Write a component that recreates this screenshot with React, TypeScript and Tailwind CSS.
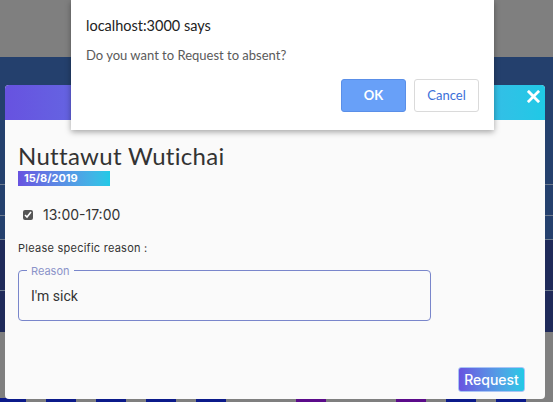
import React from 'react';

function CloseIcon() {
    return (
        <svg width="13" height="13" viewBox="0 0 14 14" fill="none">
            <path d="M2 2L12 12M12 2L2 12" stroke="white" strokeWidth="3" strokeLinecap="square" />
        </svg>
    );
}

export default function App() {
    return (
        <div className="relative w-[553px] h-[402px] overflow-hidden bg-[#7f7f7f] font-['Lato',sans-serif]">
            {/* dimmed page behind */}
            <div className="flex flex-col h-full">
                <div className="h-[57px] bg-[#7f7f7f]" />
                <div className="h-[127px] bg-[#24406d]" />
                <div className="h-px bg-[#6c7a8e]" />
                <div className="h-[30px] bg-[#24406d]" />
                <div className="h-px bg-[#6c7a8e]" />
                <div className="h-[23px] bg-[#24406d]" />
                <div className="h-px bg-[#6c7a8e]" />
                <div className="h-[50px] bg-[#1f2a5a]" />
                <div className="h-px bg-[#6c7a8e]" />
                <div className="h-[41px] bg-[#1f2a5a]" />
                <div className="flex-1 bg-[#7f7f7f] flex items-end">
                    <div className="flex w-full h-[4px] gap-[20px]">
                        <div className="w-[26px] bg-[#0b1a8a]" />
                        <div className="w-[30px] bg-[#0b1a8a]" />
                        <div className="w-[30px] bg-[#0b1a8a]" />
                        <div className="w-[30px] bg-[#0b1a8a]" />
                        <div className="w-[30px] bg-[#0b1a8a]" />
                        <div className="w-[30px] bg-[#7f7f7f]" />
                        <div className="w-[30px] bg-[#5b0b8a]" />
                        <div className="w-[30px] bg-[#7f7f7f]" />
                        <div className="w-[30px] bg-[#5b0b8a]" />
                        <div className="w-[30px] bg-[#0b1a8a]" />
                        <div className="w-[30px] bg-[#0b1a8a]" />
                    </div>
                </div>
            </div>

            {/* modal */}
            <div className="absolute left-[5px] top-[85px] w-[540px] h-[314px] rounded-[4px] bg-[#fafafa] flex flex-col overflow-hidden">
                <div className="h-[35px] bg-gradient-to-r from-[#6752e0] to-[#1fc9e6] flex justify-end items-start pr-[5px] pt-[5px]">
                    <CloseIcon />
                </div>
                <div className="flex flex-col flex-1 px-[13px] font-['Inter',sans-serif]">
                    <h1 className="mt-[21px] text-[24px] leading-[29px] text-[#333] font-['Lato',sans-serif] tracking-[0.3px]">Nuttawut Wutichai</h1>
                    <div className="mt-[1px] w-[92px] h-[15px] bg-gradient-to-r from-[#6752e0] to-[#1fc9e6] text-white text-[11px] font-bold leading-[15px] pl-[6px]">
                        15/8/2019
                    </div>
                    <label className="mt-[18px] ml-[5px] flex items-center gap-[10px] text-[14px] text-[#333]">
                        <input type="checkbox" defaultChecked className="w-[10px] h-[10px] accent-[#555]" />
                        13:00-17:00
                    </label>
                    <p className="mt-[15px] text-[11px] text-[#333] tracking-[0.25px]">Please specific reason :</p>
                    <fieldset className="mt-[9px] w-[413px] h-[55px] border border-[#7986cb] rounded-[4px] px-[8px]">
                        <legend className="px-[4px] text-[11px] leading-[10px] text-[#8b93c9]">Reason</legend>
                        <div className="pl-[4px] pt-[10px] text-[14px] text-[#333] font-['Roboto',sans-serif]">I'm sick</div>
                    </fieldset>
                    <div className="flex-1 flex items-end justify-end pb-[7px] pr-[7px]">
                        <button className="w-[67px] h-[25px] rounded-[3px] border border-[#a9c4f5] bg-gradient-to-r from-[#6752e0] to-[#1fc9e6] text-white text-[14px] font-medium">
                            Request
                        </button>
                    </div>
                </div>
            </div>

            {/* browser alert */}
            <div className="absolute left-[71px] top-0 w-[423px] h-[130px] bg-white shadow-[0_2px_6px_rgba(0,0,0,0.35)] font-['Lato',sans-serif] px-[15px] pt-[16px]">
                <div className="text-[14.5px] leading-[20px] text-[#222]">localhost:3000 says</div>
                <div className="mt-[10px] text-[13px] leading-[18px] text-[#5a5a5a]">Do you want to Request to absent?</div>
                <div className="mt-[15px] flex justify-end gap-[8px] pr-[0px]">
                    <button className="w-[65px] h-[33px] rounded-[3px] bg-[#68a0f8] border border-[#5a8fe8] text-white text-[13px] font-bold">OK</button>
                    <button className="w-[65px] h-[33px] rounded-[3px] bg-white border border-[#dadada] text-[#3b6fd9] text-[13px]">Cancel</button>
                </div>
            </div>
        </div>
    );
}
